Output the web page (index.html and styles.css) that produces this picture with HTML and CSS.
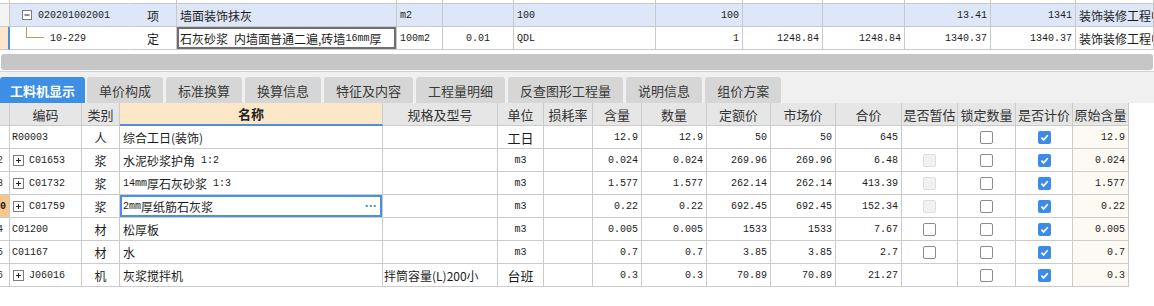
FILE: index.html
```html
<!DOCTYPE html>
<html lang="zh-CN">
<head>
<meta charset="utf-8">
<title>工料机显示</title>
<link rel="stylesheet" href="styles.css">
</head>
<body>
<div class="top">
  <div class="trow sliver">
    <div class="c"></div><div class="c nob"></div><div class="c"></div><div class="c"></div><div class="c"></div><div class="c"></div><div class="c"></div><div class="c"></div><div class="c"></div><div class="c"></div><div class="c"></div><div class="c"></div><div class="c"></div>
  </div>
  <div class="trow r1">
    <div class="c lead"></div>
    <div class="c code nob"><span class="node"><svg width="10" height="10" viewBox="0 0 10 10"><rect x="0.5" y="0.5" width="9" height="9" fill="#fff" stroke="#7c7c7c"/><path d="M2.5 5H7.5" stroke="#222"/></svg></span><span class="m t-code">020201002001</span></div>
    <div class="c ctr">项</div>
    <div class="c">墙面装饰抹灰</div>
    <div class="c"><span class="m">m2</span></div>
    <div class="c"></div>
    <div class="c"><span class="m">100</span></div>
    <div class="c rt"><span class="m">100</span></div>
    <div class="c"></div>
    <div class="c"></div>
    <div class="c rt"><span class="m">13.41</span></div>
    <div class="c rt"><span class="m">1341</span></div>
    <div class="c">装饰装修工程中</div>
  </div>
  <div class="trow r2">
    <div class="c lead cur"></div>
    <div class="c code nob"><span class="tree"></span><span class="m t-child">10-229</span></div>
    <div class="c ctr">定</div>
    <div class="c edit">石灰砂浆<span class="m">&nbsp;</span>内墙面普通二遍,砖墙<span class="m">16mm</span>厚</div>
    <div class="c"><span class="m">100m2</span></div>
    <div class="c ctr"><span class="m">0.01</span></div>
    <div class="c"><span class="m">QDL</span></div>
    <div class="c rt"><span class="m">1</span></div>
    <div class="c rt"><span class="m">1248.84</span></div>
    <div class="c rt"><span class="m">1248.84</span></div>
    <div class="c rt"><span class="m">1340.37</span></div>
    <div class="c rt"><span class="m">1340.37</span></div>
    <div class="c">装饰装修工程中</div>
  </div>
</div>

<div class="split"></div>
<div class="sep"></div>

<div class="tabbar">
  <div class="tab active">工料机显示</div>
  <div class="tab">单价构成</div>
  <div class="tab">标准换算</div>
  <div class="tab">换算信息</div>
  <div class="tab">特征及内容</div>
  <div class="tab">工程量明细</div>
  <div class="tab">反查图形工程量</div>
  <div class="tab">说明信息</div>
  <div class="tab">组价方案</div>
</div>

<div class="grid">
  <div class="row head">
    <div class="h"></div>
    <div class="h">编码</div>
    <div class="h">类别</div>
    <div class="h name">名称</div>
    <div class="h">规格及型号</div>
    <div class="h">单位</div>
    <div class="h">损耗率</div>
    <div class="h">含量</div>
    <div class="h">数量</div>
    <div class="h">定额价</div>
    <div class="h">市场价</div>
    <div class="h">合价</div>
    <div class="h">是否暂估</div>
    <div class="h">锁定数量</div>
    <div class="h">是否计价</div>
    <div class="h">原始含量</div>
  </div>

  <div class="row">
    <div class="d no"></div>
    <div class="d code"><span class="m">R00003</span></div>
    <div class="d ctr">人</div>
    <div class="d">综合工日(装饰)</div>
    <div class="d"></div>
    <div class="d ctr unit">工日</div>
    <div class="d"></div>
    <div class="d rt"><span class="m">12.9</span></div>
    <div class="d rt"><span class="m">12.9</span></div>
    <div class="d rt"><span class="m">50</span></div>
    <div class="d rt"><span class="m">50</span></div>
    <div class="d rt"><span class="m">645</span></div>
    <div class="d ctr"></div>
    <div class="d ctr"><span class="cb"></span></div>
    <div class="d ctr"><span class="cb on"><svg width="13" height="13" viewBox="0 0 13 13"><path d="M3.4 6.7 5.6 8.9 9.8 4.3" fill="none" stroke="#fff" stroke-width="1.7"/></svg></span></div>
    <div class="d rt orig"><span class="m">12.9</span></div>
  </div>

  <div class="row">
    <div class="d no"><span class="m">2</span></div>
    <div class="d code"><span class="plus"><svg width="11" height="11" viewBox="0 0 11 11"><rect x="0.5" y="0.5" width="10" height="10" fill="#fff" stroke="#7c7c7c"/><path d="M3 5.5H8M5.5 3V8" stroke="#222"/></svg></span><span class="m">C01653</span></div>
    <div class="d ctr">浆</div>
    <div class="d">水泥砂浆护角<span class="m">&nbsp;1:2</span></div>
    <div class="d"></div>
    <div class="d ctr"><span class="m">m3</span></div>
    <div class="d"></div>
    <div class="d rt"><span class="m">0.024</span></div>
    <div class="d rt"><span class="m">0.024</span></div>
    <div class="d rt"><span class="m">269.96</span></div>
    <div class="d rt"><span class="m">269.96</span></div>
    <div class="d rt"><span class="m">6.48</span></div>
    <div class="d ctr"><span class="cb dis"></span></div>
    <div class="d ctr"><span class="cb"></span></div>
    <div class="d ctr"><span class="cb on"><svg width="13" height="13" viewBox="0 0 13 13"><path d="M3.4 6.7 5.6 8.9 9.8 4.3" fill="none" stroke="#fff" stroke-width="1.7"/></svg></span></div>
    <div class="d rt orig"><span class="m">0.024</span></div>
  </div>

  <div class="row">
    <div class="d no"><span class="m">3</span></div>
    <div class="d code"><span class="plus"><svg width="11" height="11" viewBox="0 0 11 11"><rect x="0.5" y="0.5" width="10" height="10" fill="#fff" stroke="#7c7c7c"/><path d="M3 5.5H8M5.5 3V8" stroke="#222"/></svg></span><span class="m">C01732</span></div>
    <div class="d ctr">浆</div>
    <div class="d"><span class="m">14mm</span>厚石灰砂浆<span class="m">&nbsp;1:3</span></div>
    <div class="d"></div>
    <div class="d ctr"><span class="m">m3</span></div>
    <div class="d"></div>
    <div class="d rt"><span class="m">1.577</span></div>
    <div class="d rt"><span class="m">1.577</span></div>
    <div class="d rt"><span class="m">262.14</span></div>
    <div class="d rt"><span class="m">262.14</span></div>
    <div class="d rt"><span class="m">413.39</span></div>
    <div class="d ctr"><span class="cb dis"></span></div>
    <div class="d ctr"><span class="cb"></span></div>
    <div class="d ctr"><span class="cb on"><svg width="13" height="13" viewBox="0 0 13 13"><path d="M3.4 6.7 5.6 8.9 9.8 4.3" fill="none" stroke="#fff" stroke-width="1.7"/></svg></span></div>
    <div class="d rt orig"><span class="m">1.577</span></div>
  </div>

  <div class="row">
    <div class="d no cur"><span class="m">0</span></div>
    <div class="d code"><span class="plus"><svg width="11" height="11" viewBox="0 0 11 11"><rect x="0.5" y="0.5" width="10" height="10" fill="#fff" stroke="#7c7c7c"/><path d="M3 5.5H8M5.5 3V8" stroke="#222"/></svg></span><span class="m">C01759</span></div>
    <div class="d ctr">浆</div>
    <div class="d sel"><span class="m">2mm</span>厚纸筋石灰浆<span class="more">···</span></div>
    <div class="d"></div>
    <div class="d ctr"><span class="m">m3</span></div>
    <div class="d"></div>
    <div class="d rt"><span class="m">0.22</span></div>
    <div class="d rt"><span class="m">0.22</span></div>
    <div class="d rt"><span class="m">692.45</span></div>
    <div class="d rt"><span class="m">692.45</span></div>
    <div class="d rt"><span class="m">152.34</span></div>
    <div class="d ctr"><span class="cb dis"></span></div>
    <div class="d ctr"><span class="cb"></span></div>
    <div class="d ctr"><span class="cb on"><svg width="13" height="13" viewBox="0 0 13 13"><path d="M3.4 6.7 5.6 8.9 9.8 4.3" fill="none" stroke="#fff" stroke-width="1.7"/></svg></span></div>
    <div class="d rt orig"><span class="m">0.22</span></div>
  </div>

  <div class="row">
    <div class="d no"><span class="m">4</span></div>
    <div class="d code"><span class="m">C01200</span></div>
    <div class="d ctr">材</div>
    <div class="d">松厚板</div>
    <div class="d"></div>
    <div class="d ctr"><span class="m">m3</span></div>
    <div class="d"></div>
    <div class="d rt"><span class="m">0.005</span></div>
    <div class="d rt"><span class="m">0.005</span></div>
    <div class="d rt"><span class="m">1533</span></div>
    <div class="d rt"><span class="m">1533</span></div>
    <div class="d rt"><span class="m">7.67</span></div>
    <div class="d ctr"><span class="cb"></span></div>
    <div class="d ctr"><span class="cb"></span></div>
    <div class="d ctr"><span class="cb on"><svg width="13" height="13" viewBox="0 0 13 13"><path d="M3.4 6.7 5.6 8.9 9.8 4.3" fill="none" stroke="#fff" stroke-width="1.7"/></svg></span></div>
    <div class="d rt orig"><span class="m">0.005</span></div>
  </div>

  <div class="row">
    <div class="d no"><span class="m">5</span></div>
    <div class="d code"><span class="m">C01167</span></div>
    <div class="d ctr">材</div>
    <div class="d">水</div>
    <div class="d"></div>
    <div class="d ctr"><span class="m">m3</span></div>
    <div class="d"></div>
    <div class="d rt"><span class="m">0.7</span></div>
    <div class="d rt"><span class="m">0.7</span></div>
    <div class="d rt"><span class="m">3.85</span></div>
    <div class="d rt"><span class="m">3.85</span></div>
    <div class="d rt"><span class="m">2.7</span></div>
    <div class="d ctr"><span class="cb"></span></div>
    <div class="d ctr"><span class="cb"></span></div>
    <div class="d ctr"><span class="cb on"><svg width="13" height="13" viewBox="0 0 13 13"><path d="M3.4 6.7 5.6 8.9 9.8 4.3" fill="none" stroke="#fff" stroke-width="1.7"/></svg></span></div>
    <div class="d rt orig"><span class="m">0.7</span></div>
  </div>

  <div class="row">
    <div class="d no"><span class="m">6</span></div>
    <div class="d code"><span class="plus"><svg width="11" height="11" viewBox="0 0 11 11"><rect x="0.5" y="0.5" width="10" height="10" fill="#fff" stroke="#7c7c7c"/><path d="M3 5.5H8M5.5 3V8" stroke="#222"/></svg></span><span class="m">J06016</span></div>
    <div class="d ctr">机</div>
    <div class="d">灰浆搅拌机</div>
    <div class="d spec">拌筒容量(L)200小</div>
    <div class="d ctr unit">台班</div>
    <div class="d"></div>
    <div class="d rt"><span class="m">0.3</span></div>
    <div class="d rt"><span class="m">0.3</span></div>
    <div class="d rt"><span class="m">70.89</span></div>
    <div class="d rt"><span class="m">70.89</span></div>
    <div class="d rt"><span class="m">21.27</span></div>
    <div class="d ctr"></div>
    <div class="d ctr"><span class="cb"></span></div>
    <div class="d ctr"><span class="cb on"><svg width="13" height="13" viewBox="0 0 13 13"><path d="M3.4 6.7 5.6 8.9 9.8 4.3" fill="none" stroke="#fff" stroke-width="1.7"/></svg></span></div>
    <div class="d rt orig"><span class="m">0.3</span></div>
  </div>
</div>
</body>
</html>
```

FILE: styles.css
```css
html, body {
  margin: 0;
  padding: 0;
}

body {
  width: 1154px;
  height: 306px;
  overflow: hidden;
  background: #ffffff;
  font-family: "Noto Sans CJK SC", "Liberation Sans", sans-serif;
  font-size: 12px;
  color: #1c1c1c;
}

.m {
  font-family: "Liberation Mono", "DejaVu Sans Mono", monospace;
  font-size: 10px;
}

/* ---------- upper table ---------- */
.top {
  display: flex;
  flex-direction: column;
}

.trow {
  display: grid;
  grid-template-columns: 10px 120px 47px 220px 46px 71px 142px 87px 80px 82px 86px 85px 78px;
}

.trow .c {
  box-sizing: border-box;
  height: 23px;
  border-right: 1px solid #c9c9c9;
  border-bottom: 1px solid #c9c9c9;
  display: flex;
  align-items: center;
  padding: 0 3px;
  white-space: nowrap;
  overflow: hidden;
}

.trow.sliver .c {
  height: 4px;
  padding: 0;
}

.trow .c.nob {
  border-right-color: transparent;
}

.trow.r1 .c {
  background: #dde7f7;
}

.trow.r1 .c.lead {
  background: #f4f4f4;
}

.trow .c.lead {
  padding: 0;
}

.trow .c.lead.cur {
  background: #fde6cb;
  border-right: 2px solid #4a8fe0;
}

.trow .c.code {
  padding: 0;
}

.trow .c.ctr {
  justify-content: center;
}

.trow .c.rt {
  justify-content: flex-end;
}

.trow .c.edit {
  box-shadow: inset 0 0 0 2px #6f6f6f;
}

.node {
  display: flex;
  margin-left: 12px;
  width: 10px;
  height: 10px;
}

.t-code {
  margin-left: 6px;
}

.tree {
  align-self: flex-start;
  margin-left: 16px;
  width: 17px;
  height: 10px;
  border-left: 1px solid #b79d5c;
  border-bottom: 1px solid #b79d5c;
}

.t-child {
  margin-left: 6px;
}

/* ---------- splitter ---------- */
.split {
  height: 16px;
  margin: 4px 1px 0;
  background: #c6c6c6;
  border-radius: 3px;
}

.sep {
  height: 1px;
  background: #f7f7f7;
  border-bottom: 1px solid #d3d3d3;
}

/* ---------- tabs ---------- */
.tabbar {
  display: flex;
  align-items: flex-end;
  gap: 3px;
  height: 31px;
  background: #f0f0f0;
}

.tab {
  height: 26px;
  padding: 0 12px;
  display: flex;
  align-items: center;
  background: #d6d6d6;
  color: #3a3a3a;
  font-size: 13px;
  border-radius: 3px 3px 0 0;
  white-space: nowrap;
}

.tab.active {
  padding: 0 10px;
  background: #3d8fe6;
  color: #ffffff;
  font-weight: bold;
  margin-right: -1px;
}

/* ---------- lower grid ---------- */
.grid {
  display: flex;
  flex-direction: column;
}

.row {
  display: grid;
  grid-template-columns: 10px 72px 38px 263px 115px 46px 49px 49px 65px 64px 65px 66px 56px 58px 57px 56px;
}

.h,
.d {
  box-sizing: border-box;
  height: 23px;
  border-right: 1px solid #cbcbcb;
  border-bottom: 1px solid #cbcbcb;
  display: flex;
  align-items: center;
  white-space: nowrap;
  overflow: hidden;
}

.h {
  justify-content: center;
  background: #e6e6e6;
  color: #333333;
  font-size: 13px;
}

.h.name {
  background: #fde7c9;
  font-weight: bold;
  color: #222222;
  border-bottom: 2px solid #4a8fe0;
}

.d {
  padding: 0 3px;
  background: #ffffff;
}

.d.no {
  padding: 0;
}

.d.no .m {
  margin-left: -3px;
  color: #333333;
}

.d.no.cur {
  background: #f8c78e;
}

.d.no.cur .m {
  margin-left: 0;
  font-weight: bold;
  color: #1a1a1a;
}

.d.code {
  padding: 0 0 0 2px;
}

.plus {
  display: flex;
  width: 11px;
  height: 11px;
  margin-left: 1px;
  margin-right: 5px;
}

.d.ctr {
  justify-content: center;
}

.d.rt {
  justify-content: flex-end;
}

.d.unit {
  font-size: 13px;
}

.d.spec {
  padding-left: 1px;
}

.d.orig {
  background: #fdf9f3;
}

.d.sel {
  box-shadow: inset 0 0 0 2px #4a8fe0;
}

.more {
  margin-left: auto;
  margin-right: 2px;
  color: #3b7fd6;
  font-family: "Liberation Sans", sans-serif;
  font-size: 12px;
  font-weight: bold;
}

.cb {
  box-sizing: border-box;
  width: 13px;
  height: 13px;
  border: 1px solid #8c8c8c;
  border-radius: 2px;
  background: #ffffff;
  display: flex;
}

.cb.dis {
  border-color: #dedede;
  background: #f1f1f1;
}

.cb.on {
  border: none;
  background: #3c8ae9;
}
```
